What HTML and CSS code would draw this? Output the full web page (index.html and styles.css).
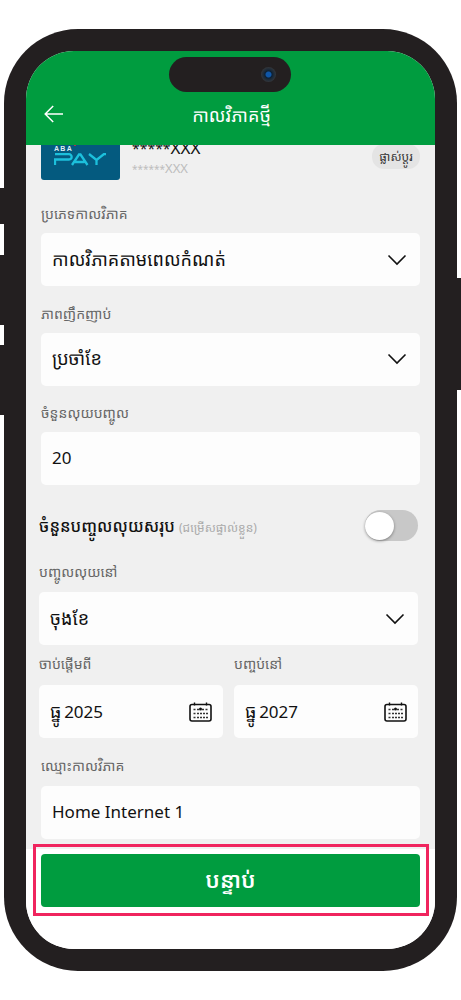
FILE: index.html
```html
<!DOCTYPE html>
<html lang="km">
<head>
<meta charset="utf-8">
<title>កាលវិភាគថ្មី</title>
<link rel="stylesheet" href="styles.css">
</head>
<body>
<div class="device">
  <span class="side side-l1"></span>
  <span class="side side-l2"></span>
  <span class="side side-l3"></span>
  <span class="side side-r1"></span>
  <div class="phone">
    <div class="screen">
      <div class="island"><span class="camera"></span></div>
      <header class="appbar">
        <svg class="back" viewBox="0 0 20 18" width="20" height="18"><path d="M19 9H1.500M9.200 1 1.200 9l8 8" fill="none" stroke="#fff" stroke-width="1.500"/></svg>
        <h1 class="title">កាលវិភាគថ្មី</h1>
      </header>
      <main class="content">
        <div class="account">
          <div class="logo">
            <span class="logo-aba">ABA<i class="logo-dot"></i></span>
            <svg class="logo-pay" viewBox="0 0 54 13" width="54" height="13"><path d="M1 12V6.500h14a2.500 2.500 0 0 0 0-5.300H1M18 12 25 1.500h1.500L33.500 12M21 9h9.500M35 1l7.500 6L50 1l2 0M42.500 7v5" fill="none" stroke="#1cc0dc" stroke-width="2.300"/></svg>
          </div>
          <div class="acct-text">
            <div class="acct-num"><span class="stars">*****</span>XXX</div>
            <div class="acct-sub"><span class="stars">******</span>XXX</div>
          </div>
          <span class="change">ផ្លាស់ប្តូរ</span>
        </div>

        <div class="section">
          <label class="label">ប្រភេទកាលវិភាគ</label>
          <div class="field"><span class="value">កាលវិភាគតាមពេលកំណត់</span><svg class="chev" viewBox="0 0 20 12" width="20" height="12"><path d="M1.500 1.500 10 10l8.500-8.500" fill="none" stroke="#111" stroke-width="1.600"/></svg></div>
        </div>
        <div class="section">
          <label class="label">ភាពញឹកញាប់</label>
          <div class="field"><span class="value">ប្រចាំខែ</span><svg class="chev" viewBox="0 0 20 12" width="20" height="12"><path d="M1.500 1.500 10 10l8.500-8.500" fill="none" stroke="#111" stroke-width="1.600"/></svg></div>
        </div>
        <div class="section">
          <label class="label">ចំនួនលុយបញ្ចូល</label>
          <div class="field"><span class="value num">20</span></div>
        </div>

        <div class="shifted">
          <div class="toggle-row">
            <div class="toggle-text"><strong class="toggle-title">ចំនួនបញ្ចូលលុយសរុប</strong> <small class="toggle-note">(ជម្រើសផ្ទាល់ខ្លួន)</small></div>
            <span class="switch"><span class="knob"></span></span>
          </div>
          <div class="section-tight">
            <label class="label">បញ្ចូលលុយនៅ</label>
            <div class="field"><span class="value">ចុងខែ</span><svg class="chev" viewBox="0 0 20 12" width="20" height="12"><path d="M1.500 1.500 10 10l8.500-8.500" fill="none" stroke="#111" stroke-width="1.600"/></svg></div>
          </div>
          <div class="dates">
            <div class="date">
              <label class="label">ចាប់ផ្តើមពី</label>
              <div class="field field-date"><span class="value">ធ្នូ <span class="num">2025</span></span><svg class="cal" viewBox="0 0 23 20" width="23" height="20"><use href="#cal"/></svg></div>
            </div>
            <div class="date">
              <label class="label">បញ្ចប់នៅ</label>
              <div class="field field-date"><span class="value">ធ្នូ <span class="num">2027</span></span><svg class="cal" viewBox="0 0 23 20" width="23" height="20"><use href="#cal"/></svg></div>
            </div>
          </div>
        </div>

        <div class="section-name">
          <label class="label">ឈ្មោះកាលវិភាគ</label>
          <div class="field"><span class="value latin">Home Internet 1</span></div>
        </div>
      </main>
      <footer class="footer">
        <button class="next">បន្ទាប់</button>
      </footer>
      <div class="highlight"></div>
    </div>
  </div>
</div>
<svg width="0" height="0" class="defs">
  <symbol id="cal" viewBox="0 0 23 20">
    <rect x="1" y="2.500" width="21" height="16.500" rx="2" fill="none" stroke="#111" stroke-width="1.600"/>
    <path d="M5.500 0.500v3M17.500 0.500v3" stroke="#111" stroke-width="1.400"/>
    <path d="M4.500 7.500h2M8 7.500h2M13 7.500h2M16.500 7.500h2M4.500 11.500h2M8 11.500h2M11 11.500h2M14 11.500h2M17 11.500h2M4.500 15.500h2M8 15.500h2M11 15.500h2M14 15.500h2M17 15.500h2" stroke="#333" stroke-width="1.600"/>
    <circle cx="11.500" cy="7" r="1.500" fill="#111"/>
  </symbol>
</svg>
</body>
</html>
```
FILE: styles.css
```css
* { box-sizing: border-box; }
html, body { margin: 0; padding: 0; background: #fff; }
body {
  width: 461px;
  height: 1000px;
  overflow: hidden;
  font-family: "Noto Sans Khmer", "Noto Sans", "Liberation Sans", sans-serif;
  color: #111;
}
.defs { position: absolute; }
.device { position: relative; width: 461px; height: 1000px; padding: 29px 4px 0 4px; }
.phone {
  width: 453px;
  height: 942px;
  padding: 22px;
  background: #231f20;
  border-radius: 74px;
}
.side { position: absolute; background: #231f20; }
.side-l1 { left: 0; top: 188px; width: 5px; height: 36px; }
.side-l2 { left: 0; top: 255px; width: 5px; height: 70px; }
.side-l3 { left: 0; top: 345px; width: 5px; height: 70px; }
.side-r1 { right: 0; top: 278px; width: 5px; height: 112px; }
.screen {
  position: relative;
  height: 898px;
  border-radius: 48px;
  overflow: hidden;
  background: #fff;
  display: flex;
  flex-direction: column;
}
.island {
  position: absolute;
  left: 143px;
  top: 6px;
  width: 122px;
  height: 35px;
  border-radius: 18px;
  background: #231f20;
  z-index: 3;
}
.camera {
  position: absolute;
  right: 15px;
  top: 10px;
  width: 15px;
  height: 15px;
  border-radius: 50%;
  background: radial-gradient(circle at 50% 50%, #0f56a8 0 2.500px, #0c2034 3.500px, #1c2a38 5px, #33363b 7.500px);
}
.appbar {
  position: relative;
  z-index: 2;
  flex: none;
  height: 94px;
  background: #009c3f;
  display: flex;
  align-items: flex-end;
  justify-content: center;
  padding: 0 0 15px 2px;
}
.back { position: absolute; left: 18px; bottom: 22px; }
.title { margin: 0; font-size: 18px; line-height: 30px; font-weight: 400; color: #fff; }
.content {
  flex: none;
  height: 704px;
  background: #f0f0f0;
  overflow: hidden;
  padding: 0 15px;
}
.account {
  display: flex;
  align-items: flex-start;
  margin-top: -15px;
  height: 50px;
  position: relative;
}
.logo {
  flex: none;
  width: 79px;
  height: 50px;
  background: #045a7f;
  border-radius: 3px;
  display: flex;
  flex-direction: column;
  padding: 14px 0 0 13px;
}
.logo-aba { position: relative; font: 700 7px/9px "Liberation Sans", sans-serif; letter-spacing: 1.300px; color: #dfeef3; }
.logo-dot { position: absolute; left: 20px; top: 0; width: 2px; height: 2px; border-radius: 50%; background: #e8273a; }
.logo-pay { margin-top: 0; }
.acct-text { margin-left: 12px; padding-top: 8px; }
.acct-num { font: 400 17px/20px "Noto Sans", sans-serif; color: #111; }
.acct-num .stars { font-size: 14px; }
.acct-sub { font: 400 13px/16px "Noto Sans", sans-serif; color: #bdbdbd; margin-top: 1px; }
.acct-sub .stars { font-size: 10px; }
.change {
  margin-left: auto;
  margin-top: 14px;
  width: 48px;
  height: 25px;
  border-radius: 12px;
  background: #e4e4e4;
  font-size: 12px;
  line-height: 25px;
  text-align: center;
  color: #333;
  white-space: nowrap;
}
.section { margin-top: 24px; }
.section + .section { margin-top: 17.500px; }
.label {
  display: block;
  font-size: 14px;
  line-height: 20px;
  height: 22px;
  color: #666;
  margin-bottom: 7px;
}
.field {
  height: 53px;
  background: #fdfdfd;
  border-radius: 5px;
  display: flex;
  align-items: center;
  justify-content: space-between;
  padding: 0 13px 0 11px;
  font-size: 18px;
  color: #111;
}
.value { position: relative; top: -1px; word-spacing: -2px; }
.num { font-family: "Noto Sans", sans-serif; font-size: 17px; }
.shifted { margin: 0 2px 0 -2px; }
.toggle-row {
  height: 36px;
  margin-top: 22px;
  padding-bottom: 0;
  display: flex;
  align-items: center;
  justify-content: space-between;
}
.toggle-title { font-size: 16.400px; font-weight: 500; color: #111; }
.toggle-note { font-size: 12px; color: #aaa; }
.switch {
  position: relative;
  width: 53px;
  height: 31px;
  border-radius: 16px;
  background: #c8c8c8;
}
.knob {
  position: absolute;
  left: 0;
  top: 2px;
  width: 29px;
  height: 28px;
  border-radius: 50%;
  background: #fff;
  box-shadow: 0 1px 3px rgba(0,0,0,.4);
}
.section-tight { margin-top: 19px; }
.section-tight .label { margin-bottom: 8px; }
.dates { display: flex; gap: 11px; margin-top: 9px; }
.date { flex: 1; }
.date .label { margin-bottom: 9px; }
.field-date { padding-right: 11px; }
.section-name { margin-top: 18px; }
.section-name .label { margin-bottom: 8px; }
.latin { font-family: "Noto Sans", sans-serif; font-size: 17px; word-spacing: 0; }
.footer {
  flex: 1;
  padding: 5px 15px 0;
  background: #fff;
}
.next {
  display: block;
  width: 100%;
  height: 53px;
  border: 0;
  border-radius: 4px;
  background: #009c3f;
  color: #fff;
  font-family: inherit;
  font-size: 22px;
  font-weight: 600;
  line-height: 50px;
  padding: 0 0 3px;
}
.highlight {
  position: absolute;
  left: 7px;
  top: 793px;
  width: 396px;
  height: 72px;
  border: 3px solid #f0245e;
  z-index: 4;
}
```
